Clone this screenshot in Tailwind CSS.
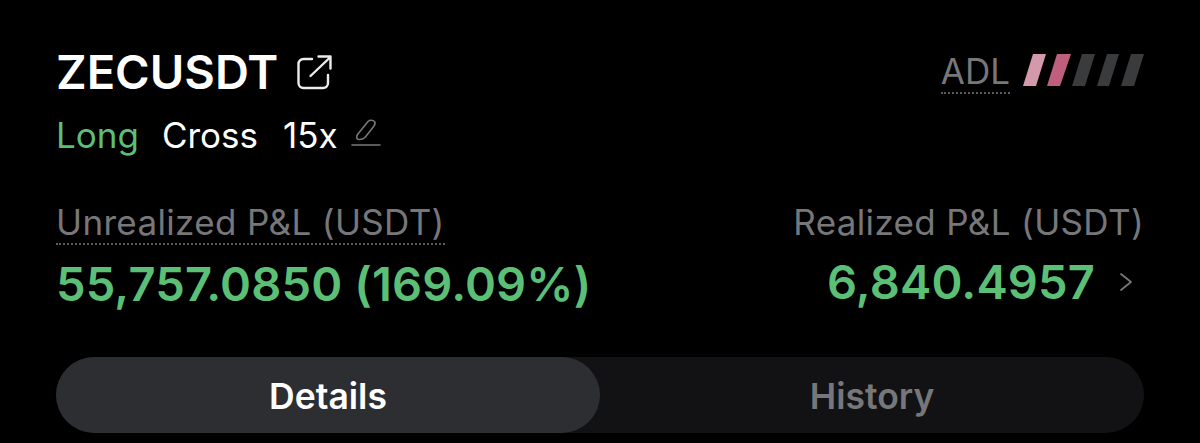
<!DOCTYPE html>
<html lang="en">
<head>
  <meta charset="UTF-8" />
  <title>ZECUSDT position</title>
  <script src="https://cdn.jsdelivr.net/npm/@tailwindcss/browser@4"></script>
</head>
<body class="bg-black w-[1200px] h-[443px] overflow-hidden font-['Inter',sans-serif]">
  <div class="px-[56px] pt-[44px]">
    <!-- Symbol row -->
    <div class="flex justify-between items-start">
      <div>
        <div class="flex items-center h-[56px]">
          <h1 class="text-[47px] leading-[56px] font-semibold text-white">ZECUSDT</h1>
          <svg class="ml-[18px] -mt-[1px] w-[38px] h-[38px] text-[#ececec]" viewBox="0 0 38 38" fill="none" stroke="currentColor" stroke-width="2.4" stroke-linecap="round" stroke-linejoin="round">
            <path d="M16 6H7.500A5 5 0 0 0 2.500 11V30A5 5 0 0 0 7.500 35H27A5 5 0 0 0 32 30V22" />
            <path d="M14.500 23 34.500 4M22.500 3.500H34.500V15.500" />
          </svg>
        </div>
        <div class="flex items-center h-[44px] mt-[13px] text-[35px] leading-[44px] text-white">
          <span class="text-[#5cbf76]">Long</span>
          <span class="ml-[23px]">Cross</span>
          <span class="ml-[25px]">15x</span>
          <svg class="ml-[13px] -mt-[5px] w-[30px] h-[30px] text-[#77777a]" viewBox="0 0 30 30" fill="none" stroke="currentColor" stroke-width="1.6" stroke-linecap="round" stroke-linejoin="round">
            <path d="M1 27H29" />
            <path d="M8 21.500C5.500 21.500 5 19 6.500 16.500L17 3.500C18.500 1.800 22 2 23.500 3.500C24.500 5 24 6.500 23 8L14 19.500C12.500 21 10.500 21.500 8 21.500Z" />
          </svg>
        </div>
      </div>
      <div class="flex items-start mt-[7px]">
        <span class="text-[35px] leading-[40px] text-[#77777a] border-b-2 border-dotted border-[#5c5c5f] pb-[1px]">ADL</span>
        <svg class="ml-[13px] mt-[3px] w-[121px] h-[33px]" viewBox="0 0 121 33">
          <polygon points="10,0 23,0 13,32 0,32" fill="#d39aab" />
          <polygon points="34,0 48,0 37,32 24,32" fill="#bd5f7d" />
          <polygon points="59,0 72,0 62,32 49,32" fill="#3a3b3d" />
          <polygon points="84,0 96,0 86,32 74,32" fill="#3a3b3d" />
          <polygon points="108,0 121,0 111,32 98,32" fill="#3a3b3d" />
        </svg>
      </div>
    </div>

    <!-- P&L row -->
    <div class="flex justify-between items-start mt-[46px]">
      <div>
        <span class="inline-block text-[35px] tracking-[0.35px] leading-[38px] text-[#77777a] border-b-2 border-dotted border-[#5c5c5f] pb-[2px]">Unrealized P&amp;L (USDT)</span>
        <div class="text-[47px] tracking-[0.15px] leading-[52px] font-semibold text-[#5cbf76] mt-[13px]">55,757.0850 (169.09%)</div>
      </div>
      <div class="flex flex-col items-end">
        <span class="text-[35px] tracking-[0.35px] leading-[38px] text-[#77777a]">Realized P&amp;L (USDT)</span>
        <div class="flex items-center mt-[15px]">
          <span class="text-[47px] tracking-[0.15px] leading-[52px] font-semibold text-[#5cbf76]">6,840.4957</span>
          <svg class="ml-[24px] mr-[11px] w-[14px] h-[20px] text-[#77777a]" viewBox="0 0 14 20" fill="none" stroke="currentColor" stroke-width="1.8" stroke-linecap="round" stroke-linejoin="round">
            <path d="M2 2 12 10 2 18" />
          </svg>
        </div>
      </div>
    </div>

    <!-- Tabs -->
    <div class="flex mt-[47px] h-[76px] rounded-full bg-[#121214]">
      <div class="w-[544px] pt-[3px] rounded-full bg-[#2d2e32] flex items-center justify-center text-[35.500px] font-semibold text-white">Details</div>
      <div class="flex-1 pt-[3px] flex items-center justify-center text-[35.500px] font-semibold text-[#77777a]">History</div>
    </div>
  </div>
</body>
</html>
